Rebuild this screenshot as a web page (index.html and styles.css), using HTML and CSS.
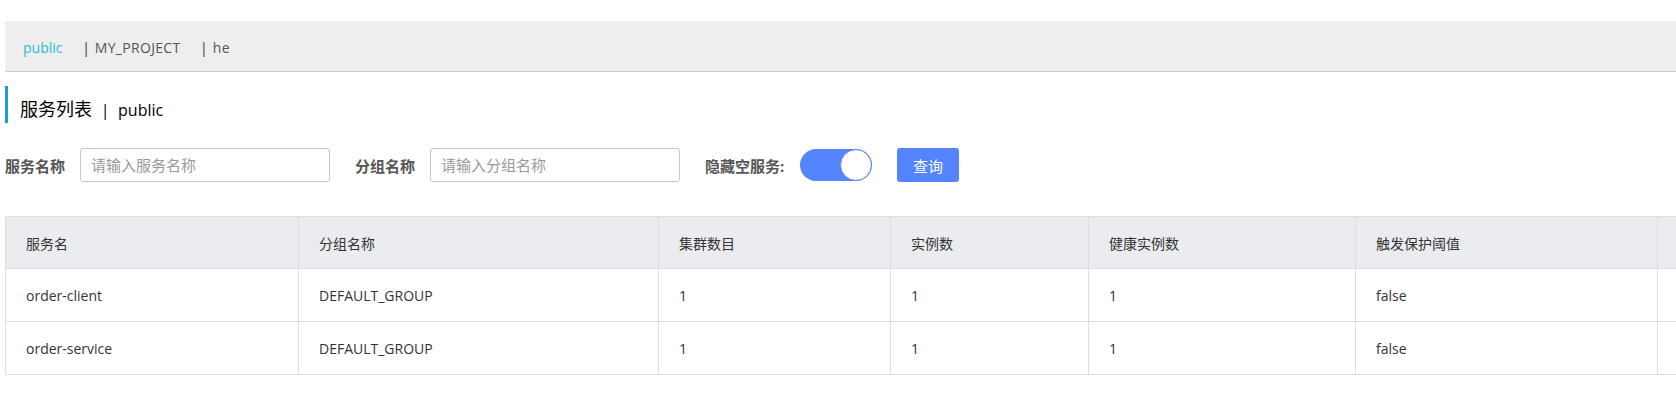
FILE: index.html
```html
<!DOCTYPE html>
<html>
<head>
  <meta charset="utf-8"/>
  <title>服务列表</title>
  <link rel="stylesheet" href="styles.css">
</head>
<body>
  <div class="main-container">
    <div class="namespace-bar">
      <span class="ns-item ns-active">public</span>
      <span class="ns-sep">|</span><span class="ns-item">MY_PROJECT</span>
      <span class="ns-sep">|</span><span class="ns-item">he</span>
    </div>

    <div class="page-title">
      <span class="title-text">服务列表</span>
      <span class="title-sep">|</span>
      <span class="title-ns">public</span>
    </div>

    <form class="search-form">
      <div class="form-item">
        <label class="form-label">服务名称</label>
        <input type="text" class="form-input" placeholder="请输入服务名称">
      </div>
      <div class="form-item">
        <label class="form-label">分组名称</label>
        <input type="text" class="form-input" placeholder="请输入分组名称">
      </div>
      <div class="form-item">
        <label class="form-label label-wide">隐藏空服务:</label>
        <div class="switch switch-on"><span class="switch-knob"></span></div>
      </div>
      <div class="form-item">
        <button type="button" class="btn-primary">查询</button>
      </div>
    </form>

    <div class="table-wrap">
      <table class="service-table">
        <colgroup>
          <col style="width: 293px">
          <col style="width: 360px">
          <col style="width: 232px">
          <col style="width: 198px">
          <col style="width: 267px">
          <col style="width: 302px">
          <col style="width: 320px">
        </colgroup>
        <thead>
          <tr>
            <th>服务名</th>
            <th>分组名称</th>
            <th>集群数目</th>
            <th>实例数</th>
            <th>健康实例数</th>
            <th>触发保护阈值</th>
            <th></th>
          </tr>
        </thead>
        <tbody>
          <tr>
            <td>order-client</td>
            <td>DEFAULT_GROUP</td>
            <td>1</td>
            <td>1</td>
            <td>1</td>
            <td>false</td>
            <td></td>
          </tr>
          <tr>
            <td>order-service</td>
            <td>DEFAULT_GROUP</td>
            <td>1</td>
            <td>1</td>
            <td>1</td>
            <td>false</td>
            <td></td>
          </tr>
        </tbody>
      </table>
    </div>
  </div>
</body>
</html>
```

FILE: styles.css
```css
html, body {
  margin: 0;
  padding: 0;
  background: #fff;
  overflow: hidden;
}

body {
  font-family: "Open Sans", "Noto Sans CJK SC", sans-serif;
  font-size: 14px;
  color: #333;
}

.main-container {
  padding: 21px 0 0 5px;
}

/* namespace bar */
.namespace-bar {
  height: 50px;
  line-height: 54px;
  background: #eee;
  border-bottom: 1px solid #ccc;
  padding-left: 18px;
  white-space: nowrap;
}

.ns-item {
  margin-right: 16px;
  color: #555;
  letter-spacing: 0.3px;
}

.ns-active {
  color: #2cb9dd;
  letter-spacing: 0;
}

.ns-sep {
  margin-right: 5px;
  color: #333;
}

/* title */
.page-title {
  margin-top: 14px;
  height: 37px;
  border-left: 3px solid #1a9fd4;
  padding-left: 12px;
  line-height: 46px;
  color: #000;
  white-space: nowrap;
}

.title-text {
  font-size: 18px;
}

.title-sep {
  font-size: 16px;
  margin: 0 5px 0 5px;
}

.title-ns {
  font-size: 16px;
}

/* search form */
.search-form {
  display: flex;
  align-items: center;
  gap: 25px;
  margin-top: 25px;
  height: 34px;
}

.form-item {
  display: flex;
  align-items: center;
}

.form-label {
  width: 75px;
  font-weight: bold;
  color: #555;
  font-size: 15px;
}

.form-label.label-wide {
  width: 95px;
}

.form-input {
  width: 250px;
  height: 34px;
  box-sizing: border-box;
  border: 1px solid #c4c6cf;
  border-radius: 3px;
  padding: 0 10px;
  font-size: 15px;
  font-family: inherit;
  color: #333;
  outline: none;
}

.form-input::placeholder {
  color: #999;
}

.switch {
  width: 72px;
  height: 32px;
  border-radius: 16px;
  background: #5584ff;
  display: flex;
  align-items: center;
  justify-content: flex-end;
}

.switch-knob {
  width: 30px;
  height: 30px;
  border-radius: 50%;
  background: #fff;
  border: 1px solid #5584ff;
}

.btn-primary {
  width: 62px;
  height: 34px;
  border: none;
  border-radius: 3px;
  background: #5584ff;
  color: #fff;
  font-size: 15px;
  font-family: inherit;
  cursor: pointer;
}

/* table */
.table-wrap {
  margin-top: 34px;
  overflow: hidden;
}

.service-table {
  border-collapse: collapse;
  table-layout: fixed;
  width: 1972px;
  border: 1px solid #dcdee3;
}

.service-table th,
.service-table td {
  border: 1px solid #dcdee3;
  padding: 0 20px;
  text-align: left;
  font-weight: normal;
  color: #333;
  white-space: nowrap;
}

.service-table th {
  height: 51px;
  background: #ebecf0;
}

.service-table td {
  height: 52px;
}
```
